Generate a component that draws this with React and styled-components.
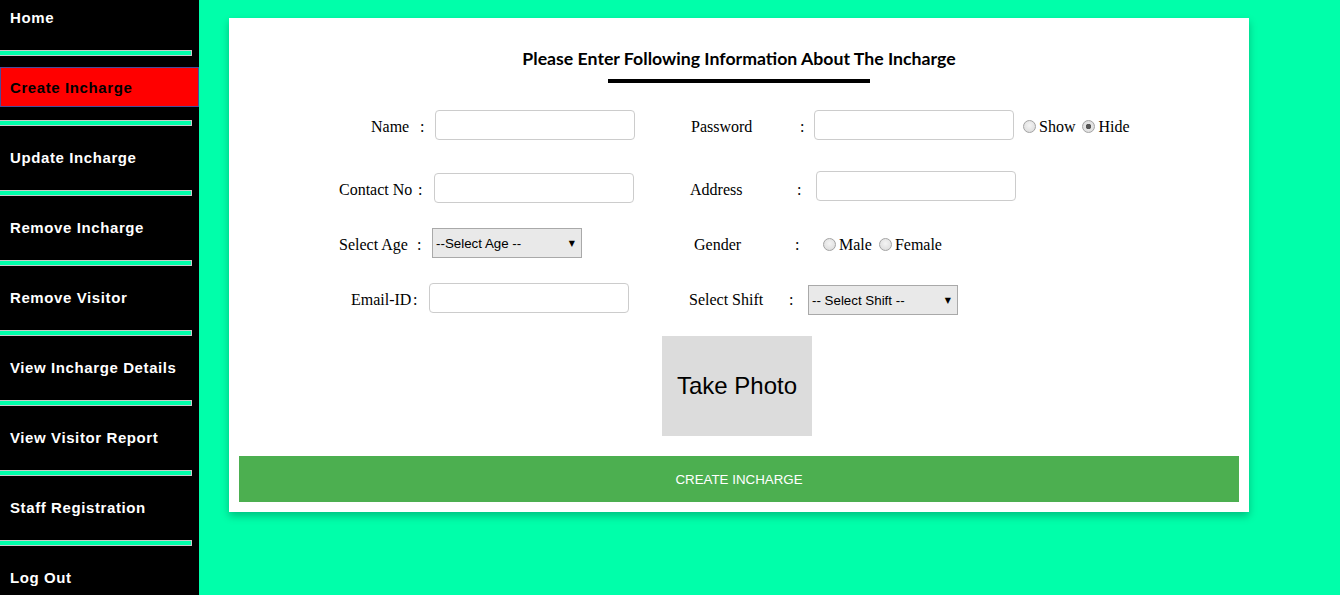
import React from "react";
import styled, { createGlobalStyle } from "styled-components";

const GlobalStyle = createGlobalStyle`
  html, body {
    margin: 0;
    padding: 0;
    height: 100%;
    background: #00ffaa;
    overflow: hidden;
  }
  * {
    box-sizing: border-box;
  }
`;

const menu = [
  "Home",
  "Create Incharge",
  "Update Incharge",
  "Remove Incharge",
  "Remove Visitor",
  "View Incharge Details",
  "View Visitor Report",
  "Staff Registration",
  "Log Out",
];

const App = () => {
  return (
    <>
      <GlobalStyle />
      <Page>
        <Sidebar>
          <Nav>
            {menu.map((item, i) => (
              <React.Fragment key={item}>
                <NavLink $active={item === "Create Incharge"}>{item}</NavLink>
                {i < menu.length - 1 && <Separator />}
              </React.Fragment>
            ))}
          </Nav>
        </Sidebar>
        <Main>
          <Card>
            <Title>Please Enter Following Information About The Incharge</Title>
            <TitleBar />

            <Row $gap={27}>
              <Group>
                <Label $w={81} $pad={32}>Name</Label>
                <Colon $w={15}>:</Colon>
                <TextInput type="text" />
              </Group>
              <Group>
                <Label $w={111} $pad={2}>Password</Label>
                <Colon $w={14}>:</Colon>
                <TextInput type="password" />
                <Radio type="radio" name="pw" $first />
                <RadioText>Show</RadioText>
                <Radio type="radio" name="pw" defaultChecked />
                <RadioText>Hide</RadioText>
              </Group>
            </Row>

            <Row $gap={33}>
              <Group>
                <Label $w={79} $pad={0}>Contact No</Label>
                <Colon $w={16}>:</Colon>
                <TextInput type="text" />
              </Group>
              <Group>
                <Label $w={108} $pad={1}>Address</Label>
                <Colon $w={19}>:</Colon>
                <TextInput type="text" $shift={-2} />
              </Group>
            </Row>

            <Row $gap={25}>
              <Group>
                <Label $w={78} $pad={0}>Select Age</Label>
                <Colon $w={15}>:</Colon>
                <SelectWrap>
                  <Select defaultValue="">
                    <option value="">--Select Age --</option>
                  </Select>
                  <Arrow>▼</Arrow>
                </SelectWrap>
              </Group>
              <Group>
                <Label $w={106} $pad={5}>Gender</Label>
                <Colon $w={19}>:</Colon>
                <Radio type="radio" name="gender" $first />
                <RadioText>Male</RadioText>
                <Radio type="radio" name="gender" />
                <RadioText>Female</RadioText>
              </Group>
            </Row>

            <Row $gap={25}>
              <Group>
                <Label $w={74} $pad={12}>Email-ID</Label>
                <Colon $w={16}>:</Colon>
                <TextInput type="text" />
              </Group>
              <Group>
                <Label $w={100} $pad={0}>Select Shift</Label>
                <Colon $w={19}>:</Colon>
                <SelectWrap $shift={2}>
                  <Select defaultValue="">
                    <option value="">-- Select Shift --</option>
                  </Select>
                  <Arrow>▼</Arrow>
                </SelectWrap>
              </Group>
            </Row>

            <PhotoBox>Take Photo</PhotoBox>
            <SubmitButton>CREATE INCHARGE</SubmitButton>
          </Card>
        </Main>
      </Page>
    </>
  );
};

const Page = styled.div`
  display: flex;
  height: 100vh;
  width: 100%;
  background: #00ffaa;
`;

const Sidebar = styled.div`
  width: 199px;
  flex-shrink: 0;
  height: 100%;
  background: #000;
  overflow: hidden;
`;

const Nav = styled.div`
  display: flex;
  flex-direction: column;
  margin-top: -3px;
`;

const NavLink = styled.div`
  height: 40px;
  display: flex;
  align-items: center;
  padding-left: 9px;
  font-family: "Liberation Sans", Arial, sans-serif;
  font-weight: bold;
  font-size: 15px;
  letter-spacing: 0.6px;
  color: ${(p) => (p.$active ? "#000" : "#fff")};
  background: ${(p) => (p.$active ? "#ff0000" : "transparent")};
  border: 1px solid ${(p) => (p.$active ? "#4b4b9a" : "transparent")};
  cursor: pointer;
`;

const Separator = styled.div`
  width: 192px;
  height: 6px;
  margin: 13px 0 11px;
  background: #00ffaa;
  border: 1px solid #c9c9c9;
  border-left: none;
`;

const Main = styled.div`
  flex: 1;
  padding: 18px 0 0 30px;
`;

const Card = styled.div`
  width: 1020px;
  background: #fff;
  padding: 10px;
  display: flex;
  flex-direction: column;
  box-shadow: 0 4px 8px rgba(0, 0, 0, 0.25);
`;

const Title = styled.div`
  margin-top: 20px;
  height: 22px;
  line-height: 22px;
  text-align: center;
  font-family: Lato, "Open Sans", sans-serif;
  font-weight: bold;
  font-size: 17.7px;
  color: #000;
`;

const TitleBar = styled.div`
  width: 262px;
  height: 4px;
  margin: 9px auto 0;
  background: #000;
`;

const Row = styled.div`
  display: flex;
  align-items: center;
  height: 30px;
  margin-top: ${(p) => p.$gap}px;
  padding-left: 100px;
`;

const Group = styled.div`
  display: flex;
  align-items: center;
  width: 350px;
  flex-shrink: 0;
  font-family: "Liberation Serif", "Times New Roman", serif;
  font-size: 16px;
  color: #000;
`;

const Label = styled.span`
  width: ${(p) => p.$w}px;
  padding-left: ${(p) => p.$pad}px;
  padding-top: 4px;
  flex-shrink: 0;
  white-space: nowrap;
`;

const Colon = styled.span`
  width: ${(p) => p.$w}px;
  padding-top: 4px;
  flex-shrink: 0;
`;

const TextInput = styled.input`
  width: 200px;
  height: 30px;
  flex-shrink: 0;
  border: 1px solid #cccccc;
  border-radius: 4px;
  background: #fff;
  outline: none;
  padding: 0 6px;
  transform: translateY(${(p) => p.$shift || 0}px);
`;

const Radio = styled.input`
  appearance: none;
  width: 13px;
  height: 13px;
  margin: 3px 3px 0 ${(p) => (p.$first ? 9 : 7)}px;
  border-radius: 50%;
  border: 1px solid #a3a3a3;
  background: radial-gradient(circle at 50% 40%, #f4f4f4 0%, #d8d8d8 100%);
  flex-shrink: 0;

  &:checked {
    background: radial-gradient(circle, #555 0, #555 2.5px, #e6e6e6 3px, #d8d8d8 100%);
  }
`;

const RadioText = styled.span`
  white-space: nowrap;
  padding-top: 4px;
`;

const SelectWrap = styled.div`
  position: relative;
  width: 150px;
  height: 30px;
  flex-shrink: 0;
  transform: translateY(${(p) => p.$shift || 0}px);
`;

const Select = styled.select`
  appearance: none;
  width: 100%;
  height: 100%;
  border: 1px solid #a9a9a9;
  border-radius: 0;
  background: #e9e9e9;
  color: #000;
  font-family: "Liberation Sans", Arial, sans-serif;
  font-size: 13.33px;
  padding: 0 0 0 3px;
  outline: none;
`;

const Arrow = styled.span`
  position: absolute;
  right: 7px;
  top: 50%;
  transform: translateY(-50%);
  font-family: "DejaVu Sans", sans-serif;
  font-size: 8px;
  color: #000;
  pointer-events: none;
`;

const PhotoBox = styled.div`
  width: 150px;
  height: 100px;
  margin: 23px auto 0;
  transform: translateX(-2px);
  background: #dcdcdc;
  display: flex;
  align-items: center;
  justify-content: center;
  font-family: "Liberation Sans", Arial, sans-serif;
  font-size: 24px;
  color: #000;
  cursor: pointer;
`;

const SubmitButton = styled.button`
  margin-top: 20px;
  width: 100%;
  height: 46px;
  border: none;
  background: #4caf50;
  color: #fff;
  font-family: "Liberation Sans", Arial, sans-serif;
  font-size: 13.33px;
  cursor: pointer;
`;

export default App;
